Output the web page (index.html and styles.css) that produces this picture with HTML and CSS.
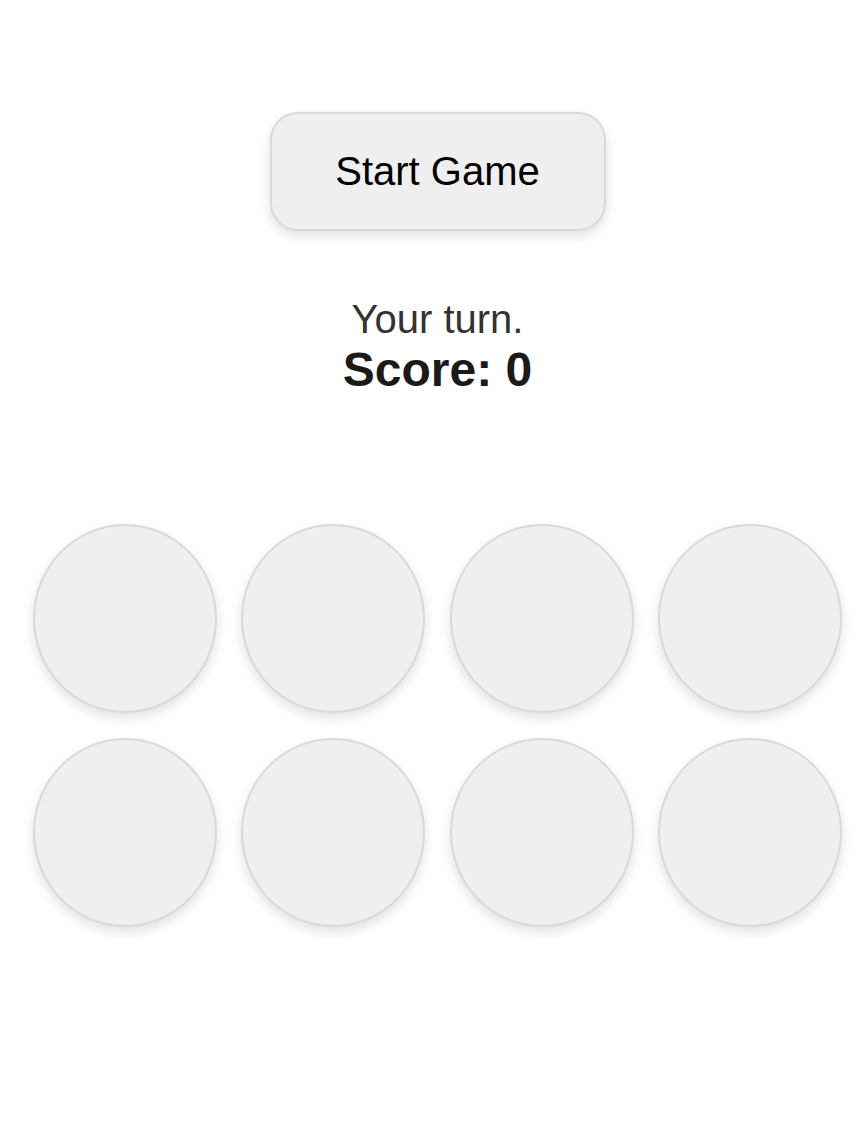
FILE: index.html
```html
<!DOCTYPE html>
<html>
<head>
<meta charset="utf-8">
<link rel="stylesheet" href="styles.css">
</head>
<body>
<div class="page">
  <button class="start">Start Game</button>
  <div class="status">
    <div class="turn">Your turn.</div>
    <div class="score">Score: 0</div>
  </div>
  <div class="board">
    <div class="pad"></div>
    <div class="pad"></div>
    <div class="pad"></div>
    <div class="pad"></div>
    <div class="pad"></div>
    <div class="pad"></div>
    <div class="pad"></div>
    <div class="pad"></div>
  </div>
</div>
</body>
</html>
```

FILE: styles.css
```css
html, body {
  margin: 0;
  padding: 0;
  background: #ffffff;
}
body {
  font-family: "Liberation Sans", Arial, sans-serif;
}
.page {
  padding-left: 9px;
  padding-bottom: 60px;
  display: flex;
  flex-direction: column;
  align-items: center;
}
.start {
  margin-top: 112px;
  box-sizing: border-box;
  width: 336px;
  height: 119px;
  background: #efefef;
  border: 2px solid #d9d9d9;
  border-radius: 28px;
  box-shadow: 0 5px 12px rgba(0, 0, 0, 0.12);
  font-family: "Liberation Sans", Arial, sans-serif;
  font-size: 40px;
  color: #000;
  padding: 0;
}
.status {
  margin-top: 65px;
  text-align: center;
}
.turn {
  font-size: 40px;
  color: #333333;
  line-height: 46px;
}
.score {
  font-size: 48px;
  font-weight: bold;
  color: #1a1a1a;
  line-height: 55px;
}
.board {
  margin-top: 127px;
  display: grid;
  grid-template-columns: repeat(4, 184px);
  column-gap: 24.3px;
  row-gap: 25px;
}
.pad {
  box-sizing: border-box;
  width: 184px;
  height: 189px;
  border-radius: 50%;
  background: #efefef;
  border: 2px solid #d9d9d9;
  box-shadow: 0 5px 12px rgba(0, 0, 0, 0.12);
}
```
